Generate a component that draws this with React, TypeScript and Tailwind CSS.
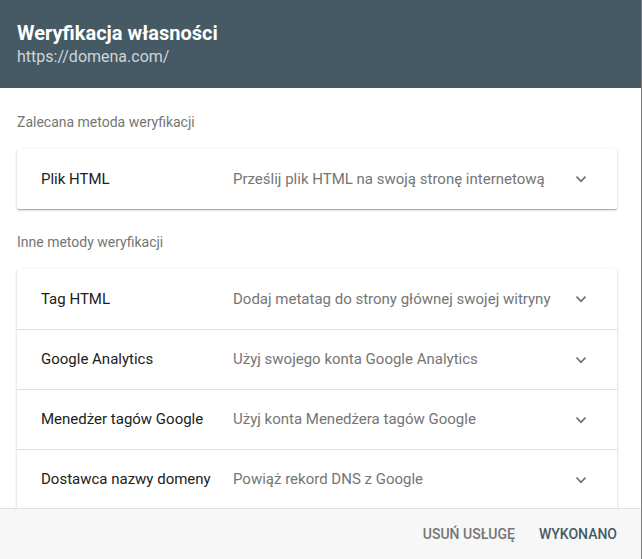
import React from 'react';

interface Method {
  name: string;
  description: string;
}

const recommended: Method = {
  name: 'Plik HTML',
  description: 'Prześlij plik HTML na swoją stronę internetową',
};

const otherMethods: Method[] = [
  { name: 'Tag HTML', description: 'Dodaj metatag do strony głównej swojej witryny' },
  { name: 'Google Analytics', description: 'Użyj swojego konta Google Analytics' },
  { name: 'Menedżer tagów Google', description: 'Użyj konta Menedżera tagów Google' },
  { name: 'Dostawca nazwy domeny', description: 'Powiąż rekord DNS z Google' },
];

function ChevronDown() {
  return (
    <svg width="24" height="24" viewBox="0 0 24 24" className="shrink-0" aria-hidden="true">
      <path
        d="M16.59 8.59 12 13.17 7.41 8.59 6 10l6 6 6-6z"
        fill="#757575"
        transform="translate(12 12) scale(0.85) translate(-12 -12)"
      />
    </svg>
  );
}

function MethodRow({ method, divided }: { method: Method; divided?: boolean }) {
  return (
    <div
      className={`flex h-[60px] items-center pl-6 pr-6 ${divided ? 'border-t border-[#e0e0e0]' : ''}`}
    >
      <span className="w-[192px] shrink-0 text-[15px] text-[#212121]">{method.name}</span>
      <span className="flex-1 truncate text-[15px] text-[#757575]">{method.description}</span>
      <ChevronDown />
    </div>
  );
}

const cardShadow =
  'shadow-[0_1px_3px_rgba(0,0,0,0.2),0_1px_1px_rgba(0,0,0,0.14),0_2px_1px_-1px_rgba(0,0,0,0.12)]';

export default function App() {
  return (
    <div
      className="flex h-[559px] w-[642px] flex-col overflow-hidden border-r border-black/50 bg-white"
      style={{ fontFamily: 'Roboto, "Noto Sans", sans-serif' }}
    >
      {/* nagłówek */}
      <div className="flex h-[88px] shrink-0 flex-col bg-[#455a64] px-[17px] pt-[20px]">
        <h1 className="text-[20px] font-bold leading-[26px] text-white">Weryfikacja własności</h1>
        <p className="mt-px text-[16px] leading-[20px] text-white/75">https://domena.com/</p>
      </div>

      {/* treść */}
      <div className="min-h-0 flex-1 overflow-hidden px-[17px] pr-6">
        <p className="mt-6 text-[14px] leading-5 text-[#757575]">Zalecana metoda weryfikacji</p>
        <div className={`mt-[17px] rounded-[2px] bg-white ${cardShadow}`}>
          <MethodRow method={recommended} />
        </div>

        <p className="mt-[23px] text-[14px] leading-5 text-[#757575]">Inne metody weryfikacji</p>
        <div className={`mt-[17px] rounded-[2px] bg-white ${cardShadow}`}>
          {otherMethods.map((m, i) => (
            <MethodRow key={m.name} method={m} divided={i > 0} />
          ))}
        </div>
      </div>

      {/* stopka */}
      <div className="flex h-[51px] shrink-0 items-center justify-end gap-6 border-t border-[#e0e0e0] bg-[#f7f7f7] pr-6">
        <button className="text-[14px] font-medium uppercase text-[#757575]">Usuń usługę</button>
        <button className="text-[14px] font-medium uppercase text-[#455a64]">Wykonano</button>
      </div>
    </div>
  );
}
